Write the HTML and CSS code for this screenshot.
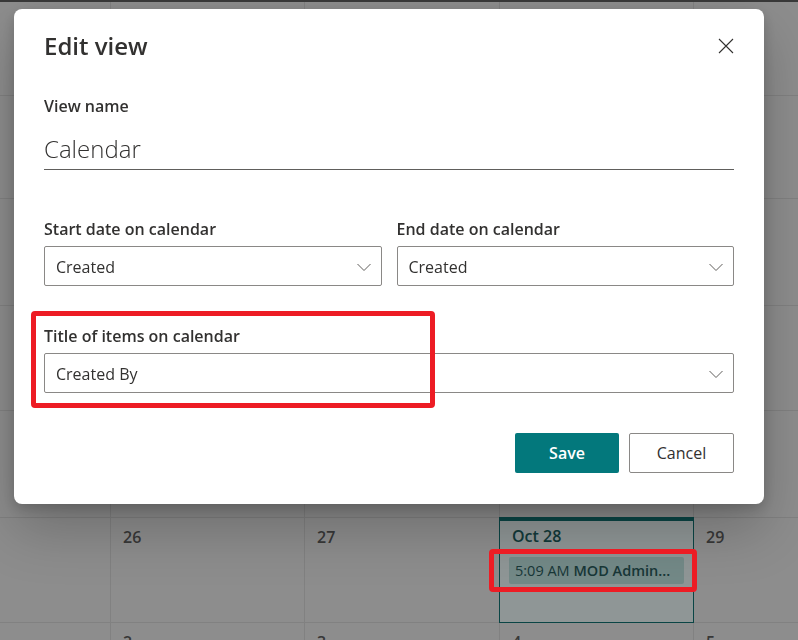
FILE: index.html
```html
<!DOCTYPE html>
<html lang="en">
<head>
    <meta charset="UTF-8">
    <meta name="viewport" content="width=device-width, initial-scale=1.0">
    <title>Calendar - Edit view</title>
    <link rel="stylesheet" href="styles.css">
</head>
<body>

<div class="suite-bar"></div>

<!-- month grid behind the dialog -->
<div class="calendar">
    <div class="cell"></div><div class="cell"></div><div class="cell"></div><div class="cell"></div><div class="cell"></div>
    <div class="cell"></div><div class="cell"></div><div class="cell"></div><div class="cell"></div><div class="cell"></div>
    <div class="cell"></div><div class="cell"></div><div class="cell"></div><div class="cell"></div><div class="cell"></div>
    <div class="cell"></div><div class="cell"></div><div class="cell"></div><div class="cell"></div><div class="cell"></div>
    <div class="cell"></div><div class="cell"></div><div class="cell"></div><div class="cell"></div><div class="cell"></div>

    <div class="cell"></div>
    <div class="cell"><span class="day">26</span></div>
    <div class="cell"><span class="day">27</span></div>
    <div class="cell today">
        <span class="day">Oct 28</span>
        <div class="event"><span class="event-time">5:09 AM</span> <span class="event-title">MOD Admin...</span></div>
    </div>
    <div class="cell"><span class="day">29</span></div>

    <div class="cell"></div>
    <div class="cell"><span class="day">2</span></div>
    <div class="cell"><span class="day">3</span></div>
    <div class="cell"><span class="day">4</span></div>
    <div class="cell"><span class="day">5</span></div>
</div>

<div class="overlay"></div>

<div class="dialog">
    <div class="dialog-header">
        <h2>Edit view</h2>
        <button class="close-button" aria-label="Close">
            <svg width="16" height="16" viewBox="0 0 16 16"><path d="M1 1 L15 15 M15 1 L1 15" stroke="#323130" stroke-width="1.1" fill="none"/></svg>
        </button>
    </div>

    <label class="field-label first">View name</label>
    <div class="name-field">Calendar</div>

    <div class="field-row">
        <div>
            <label class="field-label">Start date on calendar</label>
            <div class="dropdown">
                <span>Created</span>
                <svg width="16" height="16" viewBox="0 0 16 16"><path d="M1.5 5 L8 11.5 L14.5 5" stroke="#605e5c" stroke-width="1" fill="none"/></svg>
            </div>
        </div>
        <div>
            <label class="field-label">End date on calendar</label>
            <div class="dropdown">
                <span>Created</span>
                <svg width="16" height="16" viewBox="0 0 16 16"><path d="M1.5 5 L8 11.5 L14.5 5" stroke="#605e5c" stroke-width="1" fill="none"/></svg>
            </div>
        </div>
    </div>

    <label class="field-label spaced">Title of items on calendar</label>
    <div class="dropdown">
        <span>Created By</span>
        <svg width="16" height="16" viewBox="0 0 16 16"><path d="M1.5 5 L8 11.5 L14.5 5" stroke="#605e5c" stroke-width="1" fill="none"/></svg>
    </div>

    <div class="actions">
        <button class="btn btn-primary">Save</button>
        <button class="btn btn-default">Cancel</button>
    </div>
</div>

<!-- red annotation boxes -->
<div class="callout callout-title"></div>
<div class="callout callout-event"></div>

</body>
</html>
```

FILE: styles.css
```css
body {
    margin: 0;
    width: 798px;
    height: 640px;
    overflow: hidden;
    background-color: #ececec;
    font-family: "Segoe UI", "Open Sans", sans-serif;
    color: #323130;
}

.suite-bar {
    height: 2px;
    background-color: #606060;
}

.calendar {
    display: grid;
    grid-template-columns: 111px 194px 195px 194px 1fr;
    grid-template-rows: 94px 103px 107px 105px 107px 105px 105px;
}

.cell {
    box-sizing: border-box;
    border-right: 1px solid #d8d8d8;
    border-bottom: 1px solid #d8d8d8;
    padding: 8px 12px 0 12px;
}

.cell:nth-child(5n) {
    border-right: none;
}

.day {
    display: block;
    font-size: 16px;
    line-height: 22px;
    font-weight: 600;
    color: #5e5e5e;
}

.today {
    margin: -1px 0 0 -1px;
    border: 1px solid #117373;
    border-top-width: 4px;
    background-color: #eefbfa;
    padding: 4px 9px 0 9px;
}

.today .day {
    color: #1f6262;
    padding-left: 3px;
}

.event {
    margin-top: 10px;
    height: 27px;
    line-height: 27px;
    padding-left: 6px;
    border-radius: 2px;
    background-color: #c0e4e2;
    font-size: 14.5px;
    color: #2a5c5c;
    white-space: nowrap;
}

.event-title {
    font-weight: 600;
}

.overlay {
    position: fixed;
    top: 0;
    left: 0;
    right: 0;
    bottom: 0;
    background-color: rgba(0, 0, 0, 0.4);
}

.dialog {
    position: absolute;
    top: 9px;
    left: 14px;
    width: 750px;
    height: 495px;
    box-sizing: border-box;
    padding: 21px 30px 0 30px;
    background-color: #fff;
    border-radius: 8px;
    box-shadow: 0 25px 55px rgba(0, 0, 0, 0.22), 0 5px 14px rgba(0, 0, 0, 0.18);
}

.dialog-header {
    display: flex;
    justify-content: space-between;
    align-items: center;
    height: 32px;
}

.dialog-header h2 {
    margin: 0;
    font-size: 24px;
    line-height: 32px;
    font-weight: 600;
}

.close-button {
    display: flex;
    border: none;
    background: none;
    padding: 0;
    cursor: pointer;
}

.field-label {
    display: block;
    font-size: 16px;
    line-height: 22px;
    font-weight: 600;
    margin-bottom: 6px;
}

.field-label.first {
    margin-top: 33px;
    margin-bottom: 0;
}

.field-label.spaced {
    margin-top: 39px;
}

.name-field {
    padding: 16px 0 4px 0;
    font-size: 24px;
    line-height: 32px;
    font-weight: 350;
    border-bottom: 1px solid #605e5c;
}

.field-row {
    display: grid;
    grid-template-columns: 1fr 1fr;
    gap: 15px;
    margin-top: 48px;
}

.dropdown {
    display: flex;
    justify-content: space-between;
    align-items: center;
    height: 40px;
    box-sizing: border-box;
    padding: 1px 9px 0 11px;
    border: 1px solid #8a8886;
    border-radius: 2px;
    font-size: 16px;
}

.actions {
    display: flex;
    justify-content: flex-end;
    gap: 10px;
    margin-top: 40px;
}

.btn {
    height: 40px;
    box-sizing: border-box;
    border-radius: 2px;
    font-family: inherit;
    font-size: 16px;
    cursor: pointer;
}

.btn-primary {
    width: 104px;
    border: none;
    background-color: #03787c;
    color: #fff;
    font-weight: 600;
}

.btn-default {
    width: 105px;
    border: 1px solid #8a8886;
    background-color: #fff;
    color: #323130;
}

.callout {
    position: absolute;
    box-sizing: border-box;
    border: 5px solid #ed1c24;
    border-radius: 4px;
}

.callout-title {
    left: 31px;
    top: 311px;
    width: 404px;
    height: 97px;
}

.callout-event {
    left: 489px;
    top: 549px;
    width: 208px;
    height: 43px;
}
```
